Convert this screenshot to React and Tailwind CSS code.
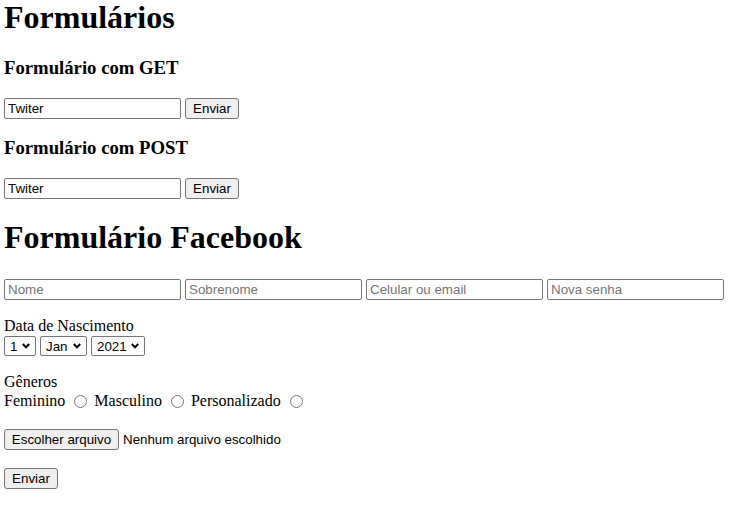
import React from 'react';

const ctl = "font-['Liberation_Sans',Arial,sans-serif] text-[13.333px] text-black";
const inputCls = `${ctl} h-[21px] w-[177px] border border-[#767676] rounded-[2px] px-[3px] bg-white outline-none placeholder:text-[#757575]`;
const btnCls = `${ctl} h-[21px] border border-[#767676] rounded-[3px] bg-[#efefef] leading-[15px] whitespace-nowrap text-center`;

const Chevron = () => (
  <svg
    className="pointer-events-none absolute right-[6px] top-[7px]"
    width="8"
    height="6"
    viewBox="0 0 8 6"
    fill="none"
  >
    <path d="M0.8 1 L4 4.3 L7.2 1" stroke="#000" strokeWidth="2" />
  </svg>
);

const Select = ({ value, width }) => (
  <span className="relative flex">
    <select
      defaultValue={value}
      className={`${ctl} ${width} h-[20px] appearance-none border border-[#767676] rounded-[2px] bg-white pl-[5px] outline-none`}
    >
      <option>{value}</option>
    </select>
    <Chevron />
  </span>
);

const SmallForm = () => (
  <form className="mt-[20px] flex gap-[4px]" onSubmit={(e) => e.preventDefault()}>
    <input type="text" defaultValue="Twiter" className={inputCls} />
    <button type="submit" className={`${btnCls} w-[54px]`}>Enviar</button>
  </form>
);

const Radio = ({ name }) => (
  <input type="radio" name={name} className="ml-[9px] mr-[7px] mt-[2px] h-[13px] w-[13px] shrink-0" />
);

export default function App() {
  return (
    <div className="px-[4px] font-['Liberation_Serif','Times_New_Roman',serif] text-[16px] text-black bg-white min-h-[505px]">
      <h1 className="text-[32px] font-bold leading-[34px]">Formulários</h1>

      <h3 className="mt-[23px] text-[18.72px] font-bold leading-[21px]">Formulário com GET</h3>
      <SmallForm />

      <h3 className="mt-[18px] text-[18.72px] font-bold leading-[21px]">Formulário com POST</h3>
      <SmallForm />

      <h2 className="mt-[21px] text-[32px] font-bold leading-[34px]">Formulário Facebook</h2>

      <form onSubmit={(e) => e.preventDefault()}>
        <div className="mt-[25px] flex gap-[4px]">
          <input type="text" placeholder="Nome" className={inputCls} />
          <input type="text" placeholder="Sobrenome" className={inputCls} />
          <input type="text" placeholder="Celular ou email" className={inputCls} />
          <input type="password" placeholder="Nova senha" className={inputCls} />
        </div>

        <div className="mt-[17px] leading-[18px]">Data de Nascimento</div>
        <div className="mt-[1px] flex gap-[4px]">
          <Select value="1" width="w-[32px]" />
          <Select value="Jan" width="w-[47px]" />
          <Select value="2021" width="w-[54px]" />
        </div>

        <div className="mt-[17px] leading-[18px]">Gêneros</div>
        <div className="flex h-[19px] items-center leading-[18px]">
          <span>Feminino</span>
          <Radio name="genero" />
          <span>Masculino</span>
          <Radio name="genero" />
          <span>Personalizado</span>
          <Radio name="genero" />
        </div>

        <div className="mt-[19px] flex items-center gap-[4px]">
          <button type="button" className={`${btnCls} w-[115px]`}>Escolher arquivo</button>
          <span className={ctl}>Nenhum arquivo escolhido</span>
        </div>

        <div className="mt-[18px] flex">
          <button type="submit" className={`${btnCls} w-[54px]`}>Enviar</button>
        </div>
      </form>
    </div>
  );
}
